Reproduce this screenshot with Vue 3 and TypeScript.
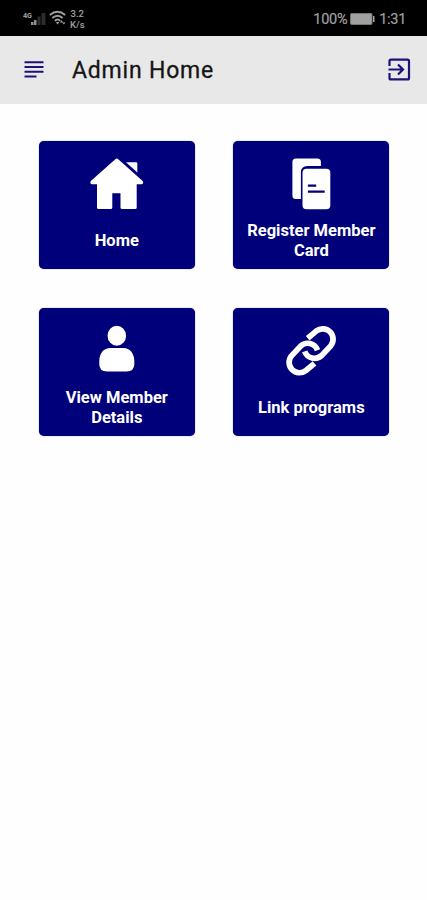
<script setup lang="ts">
type IconName = 'home' | 'cards' | 'person' | 'link'

interface Tile {
  icon: IconName
  lines: string[]
}

const tiles: Tile[] = [
  { icon: 'home', lines: ['Home'] },
  { icon: 'cards', lines: ['Register Member', 'Card'] },
  { icon: 'person', lines: ['View Member', 'Details'] },
  { icon: 'link', lines: ['Link programs'] },
]
</script>

<template>
  <div class="screen">
    <div class="status">
      <div class="status-left">
        <svg class="signal" width="24" height="18" viewBox="0 0 24 18">
          <text x="0" y="8" font-size="8" font-weight="700" fill="#a0a0a0" textLength="9" lengthAdjust="spacingAndGlyphs">4G</text>
          <path d="M8 15v-3h2.500v3z M11 15v-5h2.500v5z" fill="#909090" />
          <path d="M14.500 15V6.500h3V15z M18.500 15V3h4v12z" fill="#2c2c2c" />
        </svg>
        <svg class="wifi" width="18" height="18" viewBox="0 0 18 18" fill="none" stroke="#a0a0a0">
          <path d="M.800 6Q8.500-.500 16.200 6M3.300 9Q8.500 4.400 13.700 9M5.800 11.800Q8.500 9.300 11.200 11.800" stroke-width="1.800" />
          <path d="M6.800 13h3.600l-1.800 2.500z" fill="#a0a0a0" stroke="none" />
          <path d="M10.800 13.500l1.700-2.200 1.700 2.200zM13.300 13.500l1.500 2 1.700-2z" fill="#a0a0a0" stroke="none" />
        </svg>
        <div class="speed"><span>3.2</span><span>K/s</span></div>
      </div>
      <div class="status-right">
        <span class="percent">100%</span>
        <svg width="25" height="12" viewBox="0 0 25 12">
          <rect x=".5" y=".5" width="21.500" height="11" rx="1" fill="#a0a0a0" stroke="#757575" />
          <rect x="23" y="3" width="1.500" height="6" fill="#a0a0a0" />
        </svg>
        <span class="clock">1:31</span>
      </div>
    </div>

    <header class="bar">
      <svg class="menu" width="20" height="20" viewBox="0 0 20 20" stroke="#1c1278" stroke-width="2">
        <path d="M.500 2.200h19M.500 7h19M.500 11.800h19M.500 16.600h12" />
      </svg>
      <h1>Admin Home</h1>
      <svg class="exit" width="24" height="24" viewBox="0 0 24 24" fill="none" stroke="#1c1278" stroke-width="2.200">
        <path d="M2.500 8V3.100q0-1.500 1.500-1.500h16.500q1.500 0 1.500 1.500v16.800q0 1.500-1.500 1.500H4q-1.500 0-1.500-1.500V15" />
        <path d="M1.500 11.500h14M11 6.500l5 5-5 5" />
      </svg>
    </header>

    <main class="grid">
      <button v-for="tile in tiles" :key="tile.icon" class="tile" type="button">
        <svg class="icon" width="56" height="54" viewBox="0 0 56 54">
          <g v-if="tile.icon === 'home'" fill="#fff">
            <path d="M26.600 1.900q1.200-1 2.400 0L53.400 23.800q1.300 1.400.6 2.500-.500 1-1.500 1H47.700V50.500q0 1.500-1.500 1.500H33q-1.500 0-1.500-1.500V36.300h-8.200V50.500q0 1.500-1.500 1.500H9.500Q8 52 8 50.500V27.300H3q-1 0-1.500-1-.700-1.100.6-2.500z" />
            <path d="M37 5.300H47q1.300 0 1.300 1.300V15.500z" />
          </g>
          <g v-else-if="tile.icon === 'cards'">
            <path d="M12.900 1.500H34.400q3.500 0 3.500 3.500v4H24.400q-6.500 0-6.500 6.500V42H12.900q-3.500 0-3.500-3.500V5q0-3.500 3.500-3.500z" fill="#fff" />
            <rect x="19.500" y="11.800" width="27.800" height="40.400" rx="4" fill="#fff" />
            <path d="M24.900 28.700h8.300M24.900 34.600h16.800" stroke="#00007b" stroke-width="2.200" />
          </g>
          <g v-else-if="tile.icon === 'person'" fill="#fff" transform="translate(0 .8)">
            <ellipse cx="27.800" cy="10.900" rx="9.300" ry="10" />
            <path d="M21 23.200H34.600C40.500 23.200 45.300 28.500 45.300 36V39.500Q45.300 46.600 37.500 46.600H18Q10.300 46.600 10.300 39.500V36C10.300 28.500 15.100 23.200 21 23.200z" />
          </g>
          <g v-else fill="none" stroke="#fff" stroke-width="5.700" transform="translate(.2 .9)">
            <path d="M24.500 13.300L33 6.200A10.400 10.400 0 0 1 47.700 20.700L38.500 30.500A10.400 10.400 0 0 1 21.500 26.500" />
            <path d="M31.300 38.500L22.800 45.600A10.400 10.400 0 0 1 8.100 31.100L17.300 21.300A10.400 10.400 0 0 1 34.300 25.300" />
          </g>
        </svg>
        <span class="label">
          <span v-for="line in tile.lines" :key="line" class="line">{{ line }}</span>
        </span>
      </button>
    </main>
  </div>
</template>

<style>
body {
  background: #fefefe;
}
</style>

<style scoped>
.screen {
  min-height: 900px;
  background: #fefefe;
  font-family: Roboto, "Liberation Sans", sans-serif;
}
.status {
  display: flex;
  justify-content: space-between;
  box-sizing: border-box;
  height: 36px;
  padding: 0 21px 0 23px;
  background: #000;
  color: #a0a0a0;
}
.status-left {
  display: flex;
  padding-top: 9px;
}
.signal {
  margin-top: 1px;
}
.wifi {
  margin-left: 2px;
}
.speed {
  display: flex;
  flex-direction: column;
  align-items: center;
  margin-left: 3px;
  font-size: 9.500px;
  line-height: 11px;
  font-weight: 500;
  margin-top: -1px;
}
.status-right {
  display: flex;
  align-items: center;
  font-size: 14.500px;
  letter-spacing: -0.300px;
  padding-top: 2px;
  -webkit-text-stroke: 0.2px #a0a0a0;
}
.status-right svg {
  margin: 0 4px 0 3px;
}
.bar {
  display: flex;
  align-items: center;
  box-sizing: border-box;
  height: 68px;
  padding: 0 16px 0 24px;
  background: #e8e8e8;
}
.bar h1 {
  flex: 1;
  margin: 0 0 0 28px;
  padding-top: 2px;
  color: #151515;
  font-size: 23px;
  font-weight: 400;
  line-height: 28px;
  letter-spacing: 0.8px;
  -webkit-text-stroke: 0.3px #151515;
}
.grid {
  display: grid;
  grid-template-columns: 156px 156px;
  grid-auto-rows: 128px;
  gap: 39px 38.500px;
  padding: 37px 0 0 38.800px;
}
.tile {
  display: flex;
  flex-direction: column;
  align-items: center;
  box-sizing: border-box;
  padding: 16px 0 0;
  border: 0;
  border-radius: 5px;
  background: #00007b;
  box-shadow: 0 0 1px rgba(0, 0, 123, 0.8);
  color: #fff;
  font-family: inherit;
}
.label {
  display: flex;
  flex: 1;
  flex-direction: column;
  align-items: center;
  justify-content: center;
  padding-top: 1.200px;
  font-size: 16.500px;
  font-weight: 700;
  line-height: 19.500px;
}
.line {
  white-space: nowrap;
}
</style>
